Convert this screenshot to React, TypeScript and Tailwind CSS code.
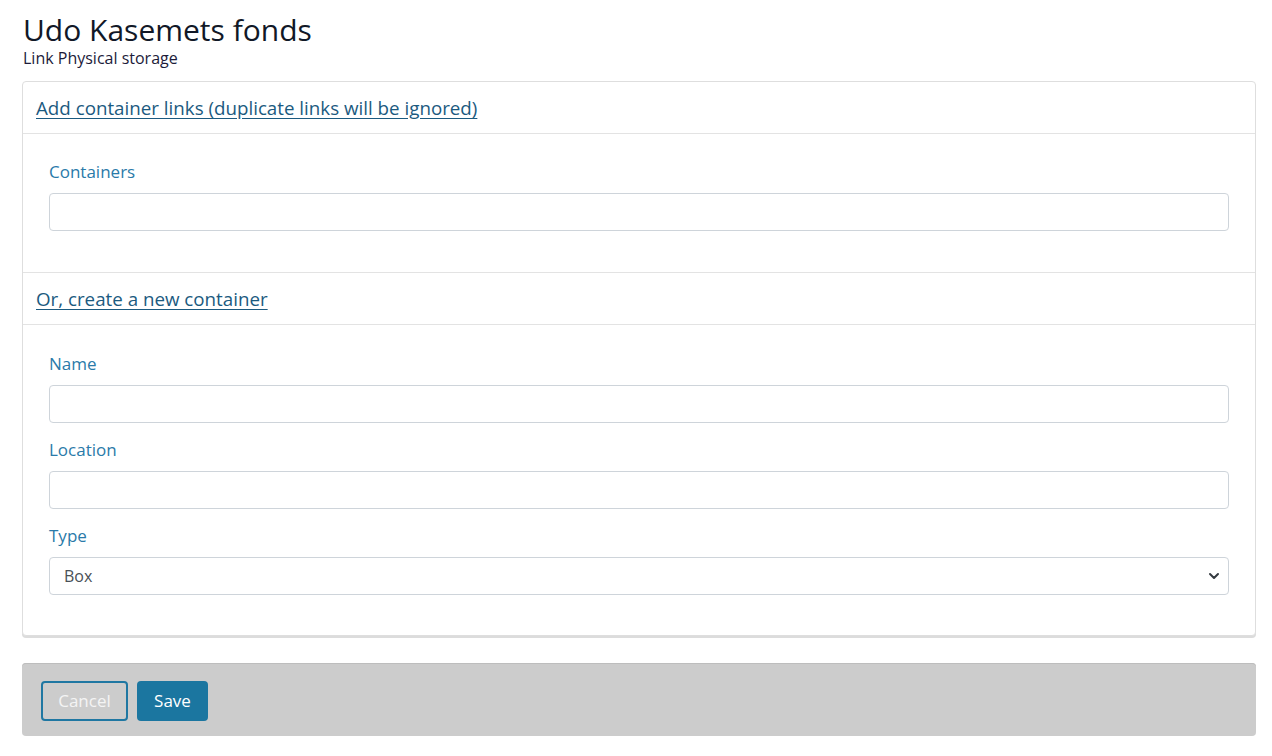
import { ChevronDown } from 'lucide-react';

const font = { fontFamily: '"Open Sans", "Noto Sans", sans-serif' };

function Field({ label, children }: { label: string; children: React.ReactNode }) {
  return (
    <div className="mb-[14px] last:mb-0">
      <label className="block mb-2 text-[17px] leading-[26px] text-[#2a7aa9]">{label}</label>
      {children}
    </div>
  );
}

function TextInput() {
  return (
    <input
      type="text"
      className="block w-full h-[38px] px-3 rounded-[4px] border border-[#ced4da] bg-white text-[16px] text-[#495057] outline-none"
    />
  );
}

function SectionHeader({ children }: { children: React.ReactNode }) {
  return (
    <div className="px-[13px] py-3 border-b border-[#e3e3e3]">
      <a href="#" className="block text-[18.75px] leading-[27px] text-[#1b5a80] underline underline-offset-[3px]">
        {children}
      </a>
    </div>
  );
}

export default function App() {
  return (
    <div className="min-h-[756px] bg-white pt-[13px] pb-5 pl-[22px] pr-[16px]" style={font}>
      <h1 className="text-[30px] leading-[34px] text-[#111827] ml-[1px]">Udo Kasemets fonds</h1>
      <p className="mt-[1px] text-[16px] leading-[20px] text-[#1c1b3a] ml-[1px]">Link Physical storage</p>

      <div className="mt-[13px] rounded-[4px] border border-[#dedede] shadow-[0_2px_0_#dcdcdc] bg-white">
        <SectionHeader>Add container links (duplicate links will be ignored)</SectionHeader>
        <div className="px-[26px] pt-[25px] pb-[41px] border-b border-[#e3e3e3]">
          <Field label="Containers">
            <TextInput />
          </Field>
        </div>

        <SectionHeader>Or, create a new container</SectionHeader>
        <div className="px-[26px] pt-[26px] pb-[40px]">
          <Field label="Name">
            <TextInput />
          </Field>
          <Field label="Location">
            <TextInput />
          </Field>
          <Field label="Type">
            <div className="relative">
              <select className="block w-full h-[38px] pl-[14px] pr-10 rounded-[4px] border border-[#ced4da] bg-white text-[16px] text-[#495057] appearance-none outline-none">
                <option>Box</option>
              </select>
              <ChevronDown
                className="absolute right-[7px] top-1/2 -translate-y-1/2 w-[16px] h-[16px] text-[#343a40] pointer-events-none"
                strokeWidth={3}
              />
            </div>
          </Field>
        </div>
      </div>

      <div className="mt-[27px] rounded-[4px] bg-[#cccccc] shadow-[inset_0_1px_0_#bdbdbd] pl-[19px] pt-[18px] pb-[15px] flex gap-[9px]">
        <button className="h-[40px] w-[87px] rounded-[4px] border-2 border-[#1f77a2] text-[17px] text-[#f4f4f4] bg-transparent">
          Cancel
        </button>
        <button className="h-[40px] w-[71px] rounded-[4px] bg-[#1b76a0] text-[17px] text-white">
          Save
        </button>
      </div>
    </div>
  );
}
